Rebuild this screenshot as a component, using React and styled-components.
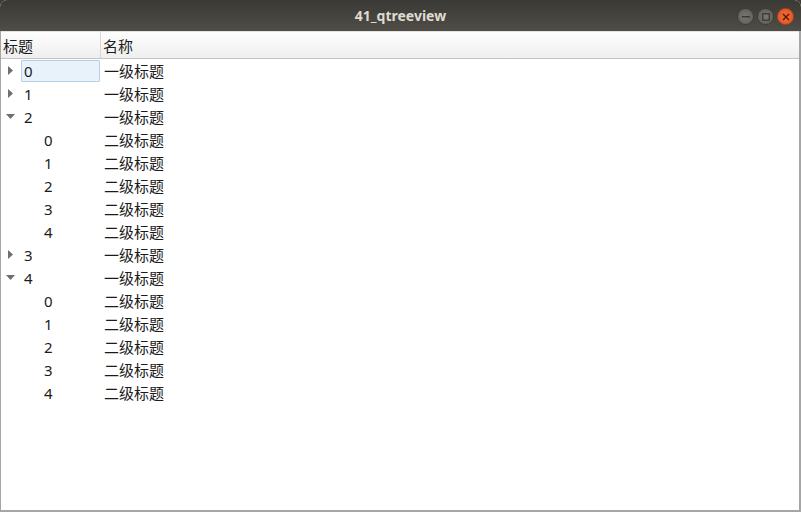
import styled, { createGlobalStyle } from "styled-components";

const Global = createGlobalStyle`
  html, body { margin: 0; padding: 0; background: #3c3b37; }
  body { width: 801px; height: 512px; overflow: hidden; }
`;

const Window = styled.div`
  width: 801px;
  height: 512px;
  display: flex;
  flex-direction: column;
  font-family: "Noto Sans", "Noto Sans CJK SC", sans-serif;
  background: #ffffff;
  border-radius: 7px 7px 0 0;
  overflow: hidden;
`;

const TitleBar = styled.div`
  height: 31px;
  flex: none;
  position: relative;
  display: flex;
  align-items: center;
  justify-content: center;
  background: linear-gradient(#3a3935, #504d47);
  color: #dfdbd2;
  font-weight: bold;
  font-size: 14px;
`;

const Buttons = styled.div`
  position: absolute;
  right: 7px;
  top: 8px;
  display: flex;
  gap: 3px;
`;

const WinButton = styled.div`
  width: 15px;
  height: 15px;
  border-radius: 50%;
  background: ${(p) => (p.$close ? "radial-gradient(#f26a3a, #e0531f)" : "radial-gradient(#7a7873, #5c5a55)")};
  border: 1px solid ${(p) => (p.$close ? "#b44318" : "#3e3d39")};
  display: flex;
  align-items: center;
  justify-content: center;
`;

const Body = styled.div`
  flex: 1;
  display: flex;
  flex-direction: column;
  border-left: 1px solid #a6a6a6;
  border-right: 2px solid #a6a6a6;
  border-bottom: 2px solid #a6a6a6;
  background: #fff;
`;

const Header = styled.div`
  height: 26px;
  flex: none;
  display: flex;
  background: linear-gradient(#fdfdfd, #efefef);
  border-bottom: 1px solid #c4c4c4;
  border-top: 1px solid #e2e2e2;
`;

const HeaderCell = styled.div`
  width: ${(p) => (p.$w ? `${p.$w}px` : "auto")};
  flex: ${(p) => (p.$w ? "none" : 1)};
  border-right: ${(p) => (p.$w ? "1px solid #d8d8d8" : "none")};
  display: flex;
  align-items: center;
  padding-left: 2px;
  font-size: 15px;
  color: #1b1b1b;
  box-sizing: border-box;
`;

const Row = styled.div`
  height: 23px;
  display: flex;
  align-items: center;
  font-size: 15px;
  color: #1b1b1b;
`;

const First = styled.div`
  width: 99px;
  height: 100%;
  flex: none;
  display: flex;
  align-items: center;
  padding-left: ${(p) => p.$indent}px;
  box-sizing: border-box;
`;

const Arrow = styled.div`
  width: 20px;
  flex: none;
  display: flex;
  justify-content: center;
  align-items: center;
  padding-right: 2px;
  box-sizing: border-box;
`;

const Key = styled.div`
  flex: 1;
  height: 22px;
  display: flex;
  align-items: center;
  padding-left: 2px;
  box-sizing: border-box;
  border: 1px solid ${(p) => (p.$sel ? "#b4cfe8" : "transparent")};
  background: ${(p) => (p.$sel ? "#e7f2fb" : "transparent")};
  border-radius: 1px;
`;

const Name = styled.div`
  padding-left: 4px;
`;

const Right = () => (
  <svg width="5" height="9" viewBox="0 0 5 9">
    <path d="M0 0 L5 4.5 L0 9 Z" fill="#6f6f6f" />
  </svg>
);
const Down = () => (
  <svg width="9" height="5" viewBox="0 0 9 5">
    <path d="M0 0 L9 0 L4.5 5 Z" fill="#6f6f6f" />
  </svg>
);

const data = [
  { k: "0", open: false, sel: true },
  { k: "1", open: false },
  { k: "2", open: true },
  { k: "3", open: false },
  { k: "4", open: true },
];

export default function App() {
  const rows = [];
  data.forEach((d) => {
    rows.push(
      <Row key={d.k}>
        <First $indent={0}>
          <Arrow>{d.open ? <Down /> : <Right />}</Arrow>
          <Key $sel={d.sel}>{d.k}</Key>
        </First>
        <Name>一级标题</Name>
      </Row>
    );
    if (d.open) {
      ["0", "1", "2", "3", "4"].forEach((c) => {
        rows.push(
          <Row key={d.k + c}>
            <First $indent={20}>
              <Arrow />
              <Key>{c}</Key>
            </First>
            <Name>二级标题</Name>
          </Row>
        );
      });
    }
  });

  return (
    <>
      <Global />
      <Window>
        <TitleBar>
          41_qtreeview
          <Buttons>
            <WinButton>
              <svg width="8" height="2"><rect width="8" height="1.5" fill="#3b3a36" /></svg>
            </WinButton>
            <WinButton>
              <svg width="8" height="8"><rect x="0.75" y="0.75" width="6.5" height="6.5" fill="none" stroke="#3b3a36" strokeWidth="1.3" /></svg>
            </WinButton>
            <WinButton $close>
              <svg width="8" height="8"><path d="M1 1 L7 7 M7 1 L1 7" stroke="#4a1c08" strokeWidth="1.4" /></svg>
            </WinButton>
          </Buttons>
        </TitleBar>
        <Body>
          <Header>
            <HeaderCell $w={100}>标题</HeaderCell>
            <HeaderCell>名称</HeaderCell>
          </Header>
          {rows}
        </Body>
      </Window>
    </>
  );
}
